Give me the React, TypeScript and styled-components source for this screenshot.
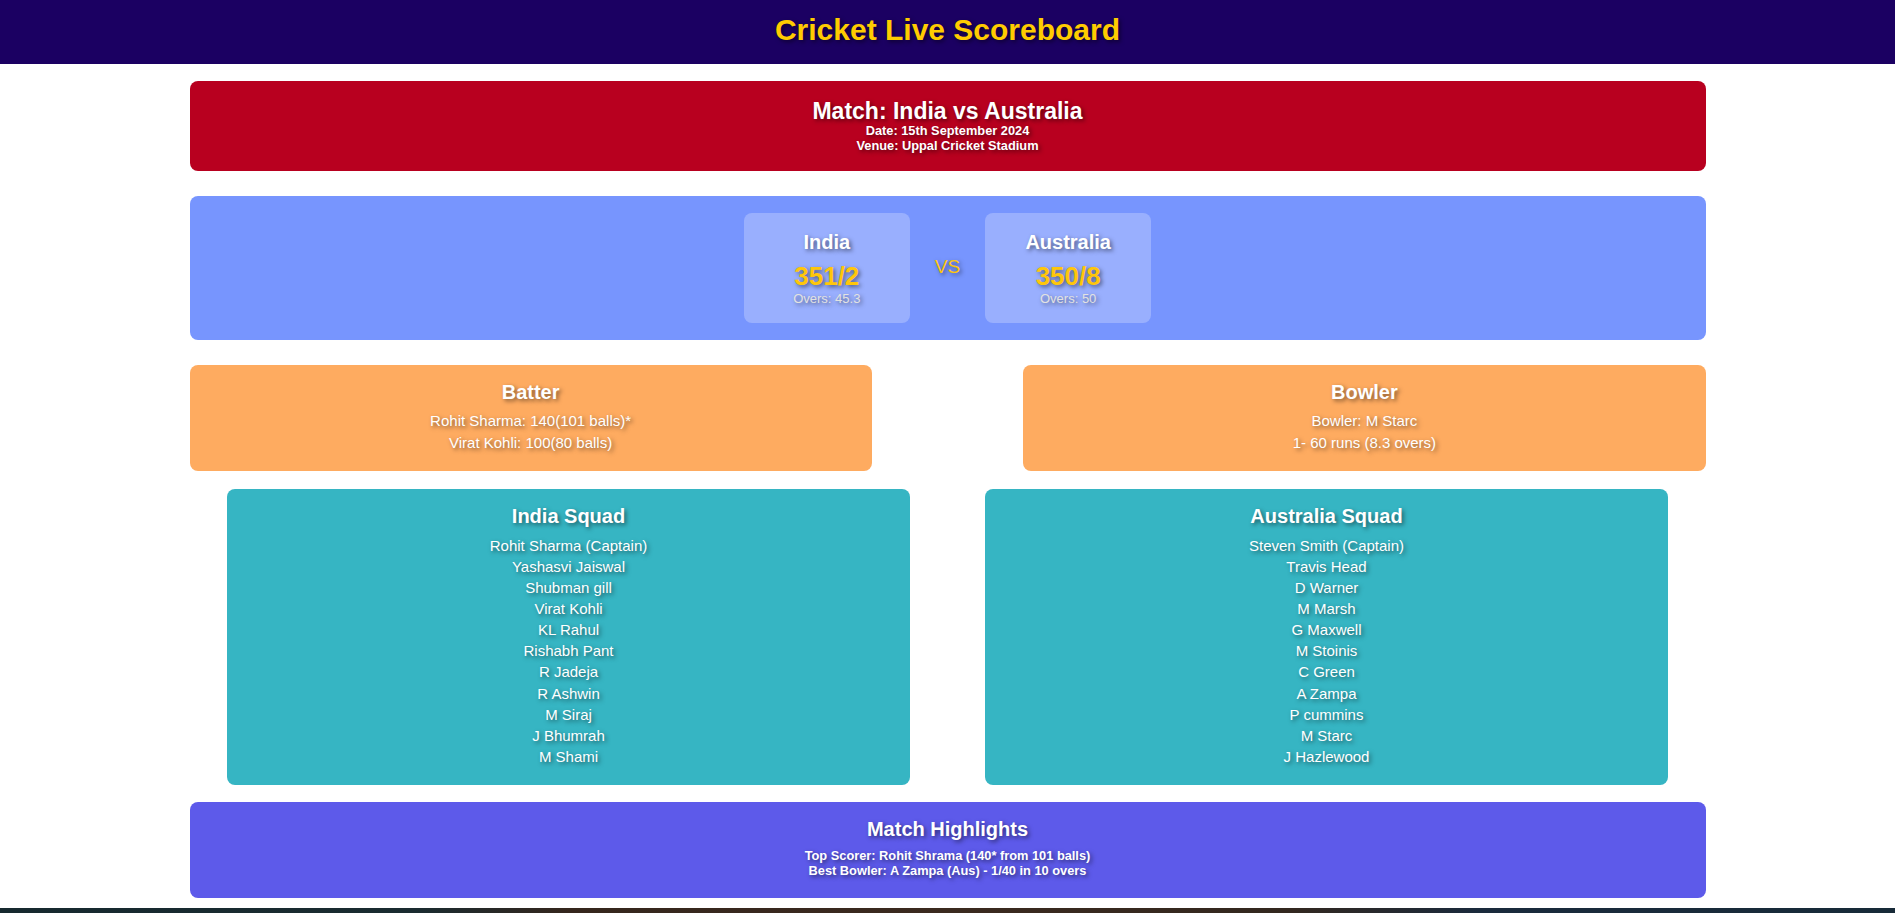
import React from "react";
import styled, { createGlobalStyle } from "styled-components";

const GlobalStyle = createGlobalStyle`
  html, body {
    margin: 0;
    padding: 0;
    background: #ffffff;
    font-family: "Liberation Sans", Arial, sans-serif;
  }
  * { box-sizing: border-box; }
`;

const shadow = "2px 2px 4px rgba(0, 0, 0, 0.5)";

const Header = styled.header`
  background: #1b0062;
  padding: 13px 0 17px;
  text-align: center;
`;

const Title = styled.h1`
  margin: 0;
  font-size: 30px;
  line-height: 34px;
  font-weight: bold;
  color: #ffcc00;
  text-shadow: ${shadow};
`;

const Container = styled.main`
  width: 80%;
  margin: 0 auto;
`;

const Panel = styled.section<{ $bg: string; $mt: number }>`
  background: ${(p) => p.$bg};
  border-radius: 8px;
  margin-top: ${(p) => p.$mt}px;
  color: #ffffff;
  text-align: center;
  text-shadow: ${shadow};
`;

const MatchPanel = styled(Panel)`
  padding: 16.5px 16px 17.5px;
`;

const MatchTitle = styled.h2`
  margin: 0;
  font-size: 23px;
  line-height: 26.5px;
  font-weight: bold;
`;

const SmallLine = styled.p`
  margin: 0;
  font-size: 12.8px;
  line-height: 14.7px;
  font-weight: bold;
`;

const ScorePanel = styled(Panel)`
  padding: 17px 0 17px;
  display: flex;
  justify-content: center;
  align-items: center;
  gap: 25px;
`;

const TeamCard = styled.div`
  width: 166px;
  padding: 18px 0 17px;
  background: rgba(255, 255, 255, 0.25);
  border-radius: 8px;
  display: flex;
  flex-direction: column;
  align-items: center;
`;

const TeamName = styled.h3`
  margin: 0 0 7px;
  font-size: 20px;
  line-height: 23px;
  font-weight: bold;
`;

const Score = styled.div`
  font-size: 26px;
  line-height: 30px;
  font-weight: bold;
  color: #ffc60a;
`;

const Overs = styled.div`
  font-size: 13px;
  line-height: 15px;
  color: #e2e2e2;
`;

const Versus = styled.div`
  font-size: 19px;
  color: #ffc60a;
  text-shadow: ${shadow};
  margin-bottom: 2px;
`;

const Row = styled.div<{ $mt: number; $justify: string }>`
  display: flex;
  justify-content: ${(p) => p.$justify};
  margin-top: ${(p) => p.$mt}px;
`;

const Card = styled.div<{ $bg: string }>`
  width: 45%;
  background: ${(p) => p.$bg};
  border-radius: 8px;
  color: #ffffff;
  text-align: center;
  text-shadow: ${shadow};
`;

const InfoCard = styled(Card)`
  padding: 16.5px 16px 18px;
`;

const SquadCard = styled(Card)`
  padding: 15.5px 16px 18px;
`;

const CardTitle = styled.h3<{ $gap: number }>`
  margin: 0 0 ${(p) => p.$gap}px;
  font-size: 20px;
  line-height: 23px;
  font-weight: bold;
`;

const Line = styled.p<{ $lh: number }>`
  margin: 0;
  font-size: 15px;
  line-height: ${(p) => p.$lh}px;
`;

const List = styled.ul`
  list-style: none;
  margin: 0;
  padding: 0;
`;

const Item = styled.li`
  font-size: 15px;
  line-height: 21.1px;
`;

const HighlightPanel = styled(Panel)`
  padding: 16.5px 16px 19.5px;
`;

const HighlightTitle = styled.h3`
  margin: 0 0 8px;
  font-size: 20px;
  line-height: 23px;
  font-weight: bold;
`;

const Footer = styled.footer`
  margin-top: 10px;
  height: 60px;
  background: linear-gradient(
    90deg,
    #16292f 0%,
    #1a2b30 22%,
    #35261d 30%,
    #3b2a1f 50%,
    #33281f 68%,
    #1a2a3c 78%,
    #172a38 100%
  );
`;

const indiaSquad = [
  "Rohit Sharma (Captain)",
  "Yashasvi Jaiswal",
  "Shubman gill",
  "Virat Kohli",
  "KL Rahul",
  "Rishabh Pant",
  "R Jadeja",
  "R Ashwin",
  "M Siraj",
  "J Bhumrah",
  "M Shami",
];

const ausSquad = [
  "Steven Smith (Captain)",
  "Travis Head",
  "D Warner",
  "M Marsh",
  "G Maxwell",
  "M Stoinis",
  "C Green",
  "A Zampa",
  "P cummins",
  "M Starc",
  "J Hazlewood",
];

export default function App() {
  return (
    <>
      <GlobalStyle />
      <Header>
        <Title>Cricket Live Scoreboard</Title>
      </Header>
      <Container>
        <MatchPanel $bg="#b8001f" $mt={17}>
          <MatchTitle>Match: India vs Australia</MatchTitle>
          <SmallLine>Date: 15th September 2024</SmallLine>
          <SmallLine>Venue: Uppal Cricket Stadium</SmallLine>
        </MatchPanel>

        <ScorePanel $bg="#7795fe" $mt={25}>
          <TeamCard>
            <TeamName>India</TeamName>
            <Score>351/2</Score>
            <Overs>Overs: 45.3</Overs>
          </TeamCard>
          <Versus>VS</Versus>
          <TeamCard>
            <TeamName>Australia</TeamName>
            <Score>350/8</Score>
            <Overs>Overs: 50</Overs>
          </TeamCard>
        </ScorePanel>

        <Row $mt={25} $justify="space-between">
          <InfoCard $bg="#feab60">
            <CardTitle $gap={6}>Batter</CardTitle>
            <Line $lh={21.5}>Rohit Sharma: 140(101 balls)*</Line>
            <Line $lh={21.5}>Virat Kohli: 100(80 balls)</Line>
          </InfoCard>
          <InfoCard $bg="#feab60">
            <CardTitle $gap={6}>Bowler</CardTitle>
            <Line $lh={21.5}>Bowler: M Starc</Line>
            <Line $lh={21.5}>1- 60 runs (8.3 overs)</Line>
          </InfoCard>
        </Row>

        <Row $mt={18} $justify="space-around">
          <SquadCard $bg="#36b5c3">
            <CardTitle $gap={7}>India Squad</CardTitle>
            <List>
              {indiaSquad.map((p) => (
                <Item key={p}>{p}</Item>
              ))}
            </List>
          </SquadCard>
          <SquadCard $bg="#36b5c3">
            <CardTitle $gap={7}>Australia Squad</CardTitle>
            <List>
              {ausSquad.map((p) => (
                <Item key={p}>{p}</Item>
              ))}
            </List>
          </SquadCard>
        </Row>

        <HighlightPanel $bg="#5d5aea" $mt={17}>
          <HighlightTitle>Match Highlights</HighlightTitle>
          <SmallLine>Top Scorer: Rohit Shrama (140* from 101 balls)</SmallLine>
          <SmallLine>Best Bowler: A Zampa (Aus) - 1/40 in 10 overs</SmallLine>
        </HighlightPanel>
      </Container>
      <Footer />
    </>
  );
}
